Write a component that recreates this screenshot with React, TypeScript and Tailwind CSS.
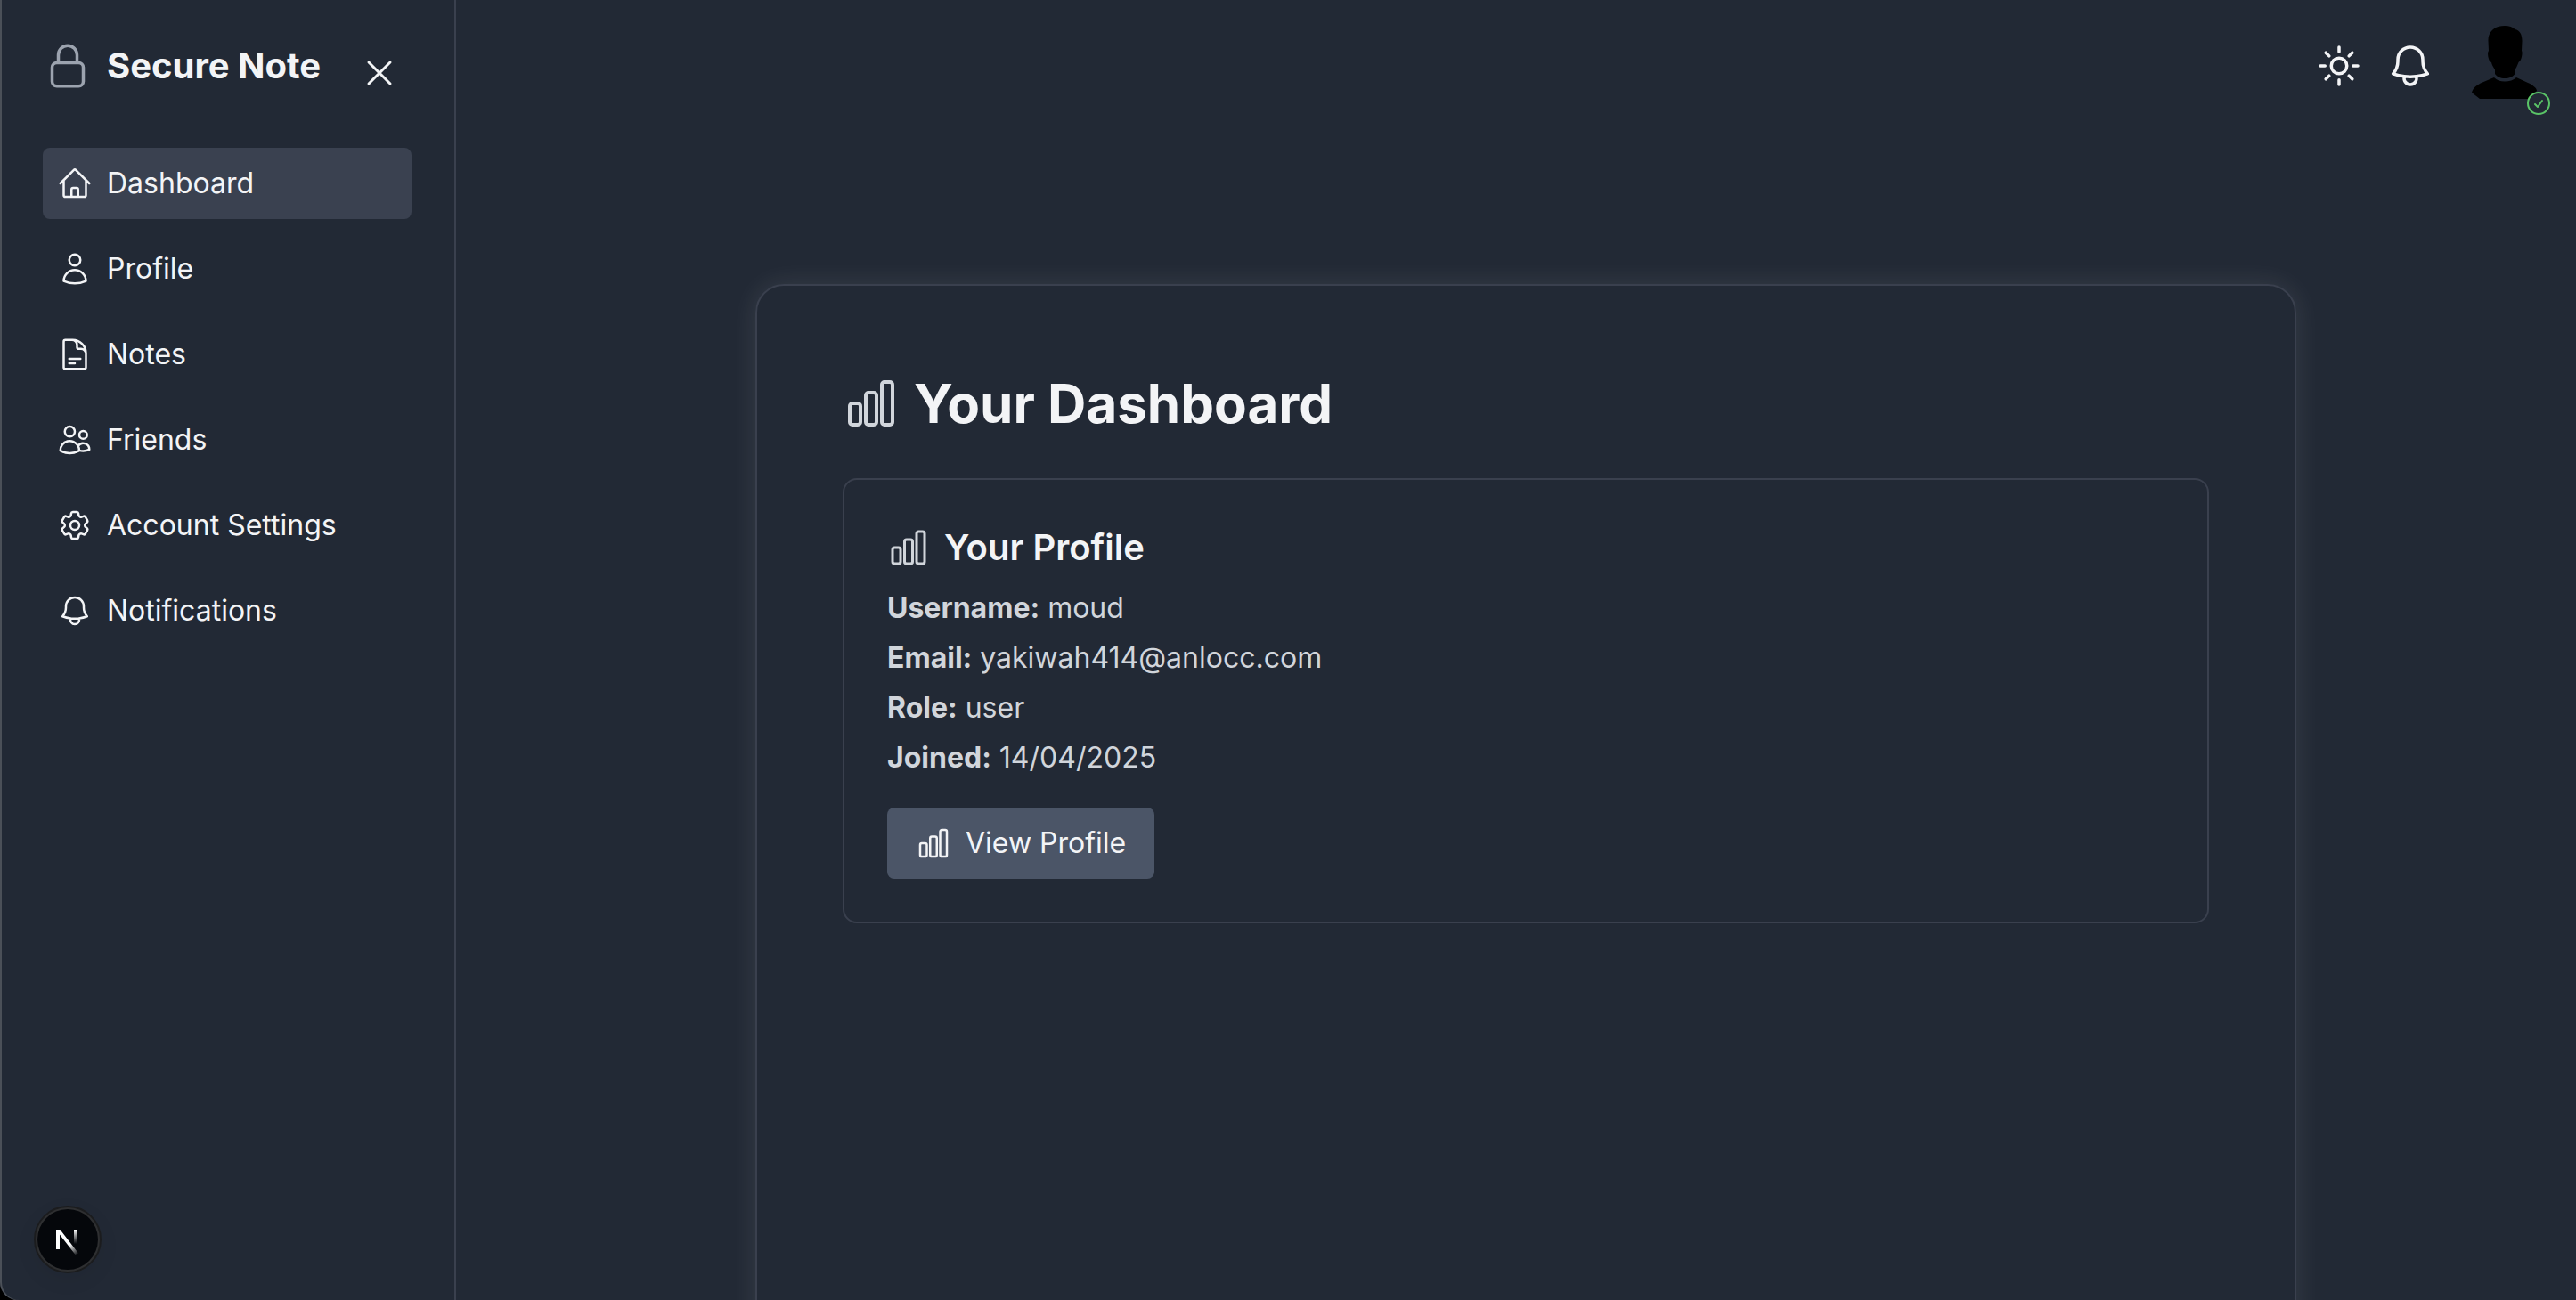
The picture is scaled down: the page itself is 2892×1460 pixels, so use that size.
import React from "react";
import {
  HiOutlineBell,
  HiOutlineChartBar,
  HiOutlineCheckCircle,
  HiOutlineCog6Tooth,
  HiOutlineDocumentText,
  HiOutlineHome,
  HiOutlineLockClosed,
  HiOutlineSun,
  HiOutlineUser,
  HiOutlineUsers,
  HiOutlineXMark,
} from "react-icons/hi2";

const navItems = [
  { label: "Dashboard", Icon: HiOutlineHome, active: true },
  { label: "Profile", Icon: HiOutlineUser, active: false },
  { label: "Notes", Icon: HiOutlineDocumentText, active: false },
  { label: "Friends", Icon: HiOutlineUsers, active: false },
  { label: "Account Settings", Icon: HiOutlineCog6Tooth, active: false },
  { label: "Notifications", Icon: HiOutlineBell, active: false },
];

const details = [
  { label: "Username:", value: "moud" },
  { label: "Email:", value: "yakiwah414@anlocc.com" },
  { label: "Role:", value: "user" },
  { label: "Joined:", value: "14/04/2025" },
];

function Sidebar() {
  return (
    <aside className="w-[512px] shrink-0 border-r-2 border-[#3a404e] px-12 pt-[46px]">
      <div className="flex h-[120px] items-start justify-between pr-3">
        <div className="flex items-center gap-4">
          <HiOutlineLockClosed className="size-14 text-[#9ca3af]" />
          <h2 className="text-[40px] leading-[56px] font-bold">Secure Note</h2>
        </div>
        <button type="button" aria-label="Close sidebar" className="mt-3">
          <HiOutlineXMark className="size-12" />
        </button>
      </div>
      <nav>
        <ul className="flex flex-col gap-4">
          {navItems.map(({ label, Icon, active }) => (
            <li key={label}>
              <a
                href="#"
                aria-current={active ? "page" : undefined}
                className={
                  active
                    ? "flex items-center gap-4 rounded-lg bg-[#3a4150] p-4 text-[32px] leading-[48px]"
                    : "flex items-center gap-4 rounded-lg p-4 text-[32px] leading-[48px]"
                }
              >
                <Icon className="size-10" />
                {label}
              </a>
            </li>
          ))}
        </ul>
      </nav>
    </aside>
  );
}

function Avatar() {
  return (
    <button type="button" aria-label="Account" className="relative ml-[6px] block size-24">
      <svg viewBox="0 0 96 96" className="size-24" fill="#000">
        <path d="M48 3C53 3 57 4.500 59.500 7C65 8 67.500 13 67.500 20L67 31C68 32 67.500 38 66 41C65 43 64 43 63.500 44C62 48 60.500 51 59.500 52.500V57C57.500 60 53 62 48 62S39 60 37 57V52.500C35 49 33.500 47 33 44C31 43 30.500 42 30 40C29 37 28.500 33 30 31L29.500 20C29 10 36 3 48 3Z" />
        <path d="M36 61C39 64 43 65.500 48 65.500S58 64 61 61L74 67C79 69 84 73 84 76L76 85H20L11 78C12 73 17 69 23 66.500Z" />
      </svg>
      <HiOutlineCheckCircle className="absolute -right-[6px] -bottom-[10px] size-8 text-[#5ac467]" />
    </button>
  );
}

function TopBar() {
  return (
    <header className="flex items-center justify-end gap-6 px-8 pt-[26px]">
      <button type="button" aria-label="Toggle theme">
        <HiOutlineSun className="size-14" />
      </button>
      <button type="button" aria-label="Notifications">
        <HiOutlineBell className="size-14" />
      </button>
      <Avatar />
    </header>
  );
}

function ProfileCard() {
  return (
    <section className="rounded-2xl border-2 border-[#3a404e] p-12">
      <h2 className="flex items-center gap-4 text-[40px] leading-[56px] font-semibold">
        <HiOutlineChartBar className="size-12 text-[#d1d5db]" />
        Your Profile
      </h2>
      <div className="mt-4 flex flex-col gap-2 text-[32px] leading-[48px] text-[#d1d5db]">
        {details.map(({ label, value }) => (
          <p key={label}>
            <strong className="font-bold">{label}</strong> {value}
          </p>
        ))}
      </div>
      <button
        type="button"
        className="mt-8 flex items-center gap-4 rounded-lg bg-[#4b5567] px-8 py-4 text-[32px] leading-[48px]"
      >
        <HiOutlineChartBar className="size-10" />
        View Profile
      </button>
    </section>
  );
}

function DevBadge() {
  return (
    <button
      type="button"
      aria-label="Open developer tools"
      className="fixed bottom-[30px] left-[38px] flex size-[76px] items-center justify-center rounded-full border-2 border-[#1b1c1e] bg-[#2e2f31] shadow-[0_8px_24px_rgba(0,0,0,0.06)]"
    >
      <span className="flex size-[68px] items-center justify-center rounded-full bg-[#05070b]">
        <svg viewBox="0 -6 28 34" className="h-[34px] w-7" fill="none">
          <defs>
            <linearGradient id="stem" x1="0" y1="0" x2="0" y2="16" gradientUnits="userSpaceOnUse">
              <stop stopColor="#fff" />
              <stop offset="1" stopColor="#fff" stopOpacity="0" />
            </linearGradient>
            <linearGradient id="slash" x1="17" y1="16" x2="26" y2="28" gradientUnits="userSpaceOnUse">
              <stop stopColor="#fff" />
              <stop offset="1" stopColor="#fff" stopOpacity="0" />
            </linearGradient>
          </defs>
          <rect x="21" y="0" width="4" height="16" fill="url(#stem)" />
          <path d="M1 22V0H5.500L26 26.500L22.500 28L5 5.500V22Z" fill="url(#slash)" />
        </svg>
      </span>
    </button>
  );
}

export default function App() {
  return (
    <div className="bg-black">
      <div className="flex h-screen overflow-hidden rounded-bl-[20px] bg-[#222935] font-['Inter',sans-serif] text-[#f3f4f6] shadow-[inset_2px_0_0_#4b5058]">
        <Sidebar />
        <div className="flex min-w-0 flex-1 flex-col">
          <TopBar />
          <main className="mt-[197px] mr-[314px] ml-[336px] min-h-[1400px] rounded-[32px] border-2 border-[#3a404e] p-24 shadow-[0_0_30px_rgba(255,255,255,0.1)]">
            <h1 className="mb-12 flex items-center gap-4 text-[60px] leading-[72px] font-bold">
              <HiOutlineChartBar className="size-16 text-[#d1d5db]" />
              Your Dashboard
            </h1>
            <ProfileCard />
          </main>
        </div>
        <DevBadge />
      </div>
    </div>
  );
}
